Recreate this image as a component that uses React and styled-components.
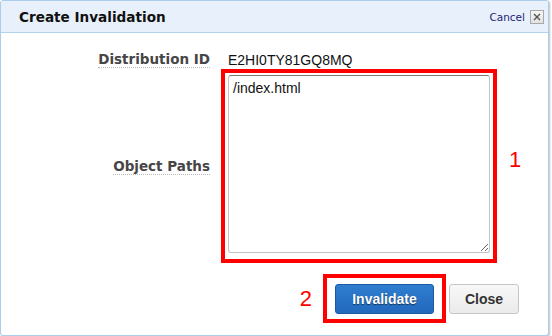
import styled, { createGlobalStyle } from "styled-components";

const GlobalStyle = createGlobalStyle`
  html, body {
    margin: 0;
    padding: 0;
    background: #ffffff;
  }
`;

const Dialog = styled.div`
  width: 549px;
  box-sizing: border-box;
  border: 1px solid #a9cdeb;
  border-radius: 3px;
  background: #ffffff;
  box-shadow: 1px 1px 2px rgba(0, 0, 0, 0.25);
  overflow: hidden;
`;

const Header = styled.div`
  display: flex;
  align-items: center;
  justify-content: space-between;
  height: 31px;
  padding: 0 4px 0 18px;
  background: #e8f1fb;
  border-bottom: 1px solid #b3d2ee;
`;

const Title = styled.span`
  font-family: "DejaVu Sans", Verdana, sans-serif;
  font-weight: bold;
  font-size: 13.6px;
  color: #111111;
`;

const CancelLink = styled.span`
  display: flex;
  align-items: center;
  gap: 5px;
  font-family: "DejaVu Sans", Verdana, sans-serif;
  font-size: 10.5px;
  color: #1c1f78;
`;

const CloseBox = styled.span`
  display: flex;
  align-items: center;
  justify-content: center;
  width: 12px;
  height: 12px;
  border: 1px solid #a8a8a8;
  background: linear-gradient(#f6f6f6, #e2e2e2);
  color: #555555;
`;

const Body = styled.div`
  display: grid;
  grid-template-columns: 209px minmax(0, 1fr);
  column-gap: 11px;
  padding: 19px 29px 12px 0;
`;

const LabelCell = styled.div`
  display: flex;
  justify-content: flex-end;
  align-items: ${(p) => (p.$center ? "center" : "flex-start")};
`;

const Label = styled.span`
  display: inline-block;
  font-family: "DejaVu Sans", Verdana, sans-serif;
  font-weight: bold;
  font-size: 13.5px;
  line-height: 15px;
  color: #464646;
  border-bottom: 1px dotted #b8b8b8;
  margin-bottom: ${(p) => p.$offset || 0}px;
`;

const Value = styled.div`
  font-family: "Liberation Sans", Arial, sans-serif;
  font-size: 14px;
  line-height: 16px;
  color: #111111;
  padding-left: 7px;
  margin-bottom: 1px;
`;

const FieldRow = styled.div`
  display: flex;
  align-items: center;
  gap: 12px;
`;

const Highlight = styled.div`
  border: 4px solid #ff0000;
  padding: ${(p) => p.$pad};
`;

const PathsInput = styled.textarea`
  display: block;
  width: 262px;
  height: 178px;
  box-sizing: border-box;
  margin: 0;
  padding: 4px 4px;
  border: 1px solid #c2c2c2;
  border-top-color: #7a7a7a;
  border-radius: 3px;
  font-family: "Liberation Sans", Arial, sans-serif;
  font-size: 14px;
  line-height: 17px;
  color: #111111;
  outline: none;
`;

const Marker = styled.span`
  font-family: "Liberation Sans", Arial, sans-serif;
  font-size: 22px;
  line-height: 22px;
  color: #ff0000;
  margin-bottom: ${(p) => p.$lift || 0}px;
`;

const Actions = styled.div`
  grid-column: 1 / -1;
  display: flex;
  justify-content: flex-end;
  align-items: center;
  margin-top: 11px;
`;

const ActionMarker = styled(Marker)`
  margin-right: 11px;
`;

const Button = styled.button`
  display: block;
  height: 30px;
  box-sizing: border-box;
  border-radius: 3px;
  font-family: "Liberation Sans", Arial, sans-serif;
  font-weight: bold;
  font-size: 14px;
  cursor: pointer;
  ${(p) =>
    p.$primary
      ? `
    width: 99px;
    background: linear-gradient(#2f7dd0, #2169bc);
    border: 1px solid #1b5aa0;
    color: #ffffff;
    text-shadow: 0 1px 1px rgba(0, 0, 0, 0.55);
  `
      : `
    width: 70px;
    margin-left: 3px;
    background: linear-gradient(#f7f7f7, #ebebeb);
    border: 1px solid #c6c6c6;
    color: #333333;
  `}
`;

export default function App() {
  return (
    <>
      <GlobalStyle />
      <Dialog>
        <Header>
          <Title>Create Invalidation</Title>
          <CancelLink>
            Cancel
            <CloseBox>
              <svg width="8" height="8" viewBox="0 0 8 8">
                <path d="M1 1 L7 7 M7 1 L1 7" stroke="#555" strokeWidth="1.4" />
              </svg>
            </CloseBox>
          </CancelLink>
        </Header>
        <Body>
          <LabelCell>
            <Label>Distribution ID</Label>
          </LabelCell>
          <Value>E2HI0TY81GQ8MQ</Value>

          <LabelCell $center>
            <Label $offset={-2}>Object Paths</Label>
          </LabelCell>
          <FieldRow>
            <Highlight $pad="2px 3px 6px">
              <PathsInput defaultValue="/index.html" />
            </Highlight>
            <Marker $lift={12}>1</Marker>
          </FieldRow>

          <Actions>
            <ActionMarker>2</ActionMarker>
            <Highlight $pad="6px 8px 5px">
              <Button $primary>Invalidate</Button>
            </Highlight>
            <Button>Close</Button>
          </Actions>
        </Body>
      </Dialog>
    </>
  );
}
